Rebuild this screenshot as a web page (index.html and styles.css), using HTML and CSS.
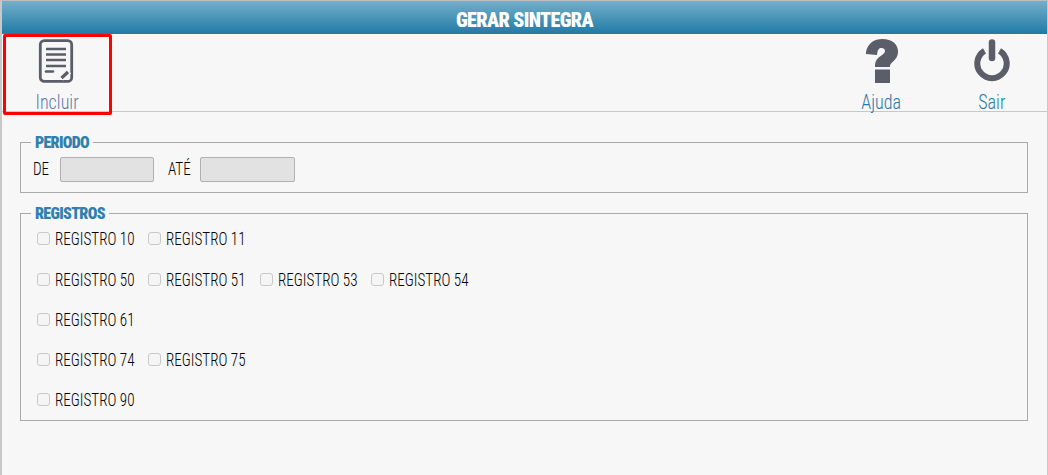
FILE: index.html
```html
<!DOCTYPE html>
<html lang="pt">
<head>
<meta charset="utf-8">
<title>Gerar Sintegra</title>
<link rel="stylesheet" href="styles.css">
</head>
<body>
<div class="frame">
  <header class="title">GERAR SINTEGRA</header>
  <nav class="toolbar">
    <a class="tool tool-first">
      <svg class="icon icon-doc" viewBox="0 0 36 46" width="36" height="46" aria-hidden="true">
        <rect x="2.300" y="2.600" width="31.400" height="40.800" rx="4" fill="none" stroke="#5b5e69" stroke-width="2.800"/>
        <path d="M8 11h20M8 16.500h20M8 22h20M8 28h20" stroke="#5b5e69" stroke-width="2.500" fill="none"/>
        <path d="M8 33.500h7" stroke="#5b5e69" stroke-width="2.600" stroke-linecap="round" fill="none"/>
        <path d="M23 40l8-7" stroke="#f7f7f7" stroke-width="6.500" fill="none"/>
        <path d="M23.500 40l6.500-6" stroke="#5b5e69" stroke-width="3.200" fill="none"/>
      </svg>
      <span class="tool-text">Incluir</span>
    </a>
    <a class="tool tool-help">
      <svg class="icon" viewBox="0 0 32 46" width="32" height="46" aria-hidden="true">
        <path d="M0 14C1.500 5.500 8 1 16.500 1 26 1 32 6 32 13.500c0 5.500-3 8.500-6 11-2 1.700-2 2.500-2 4.500H9c0-5 1-7.500 5-10.500 3-2.200 5-3 5-5.500 0-2-1.500-3-3.500-3-2.500 0-4 1.500-4.500 7L0 16z" fill="#5b5e69"/>
        <rect x="9" y="31.500" width="15" height="13.500" fill="#5b5e69"/>
      </svg>
      <span class="tool-text">Ajuda</span>
    </a>
    <a class="tool tool-exit">
      <svg class="icon" viewBox="0 0 36 46" width="36" height="46" aria-hidden="true">
        <path d="M10.500 12.800a14.700 14.700 0 1 0 15 0" fill="none" stroke="#5b5e69" stroke-width="6"/>
        <path d="M18 4.500v15.500" stroke="#5b5e69" stroke-width="6.500" stroke-linecap="round"/>
      </svg>
      <span class="tool-text">Sair</span>
    </a>
  </nav>
  <main class="content">
    <fieldset class="group group-period">
      <legend>PERIODO</legend>
      <div class="period-row">
        <label class="field-label label-de" for="de"><span class="narrow">DE</span></label>
        <input class="date date-start" id="de" type="text" disabled>
        <label class="field-label label-ate" for="ate"><span class="narrow">ATÉ</span></label>
        <input class="date" id="ate" type="text" disabled>
      </div>
    </fieldset>
    <fieldset class="group group-records">
      <legend>REGISTROS</legend>
      <div class="check-row"><label class="check"><input type="checkbox" disabled><span class="narrow">REGISTRO 10</span></label><label class="check"><input type="checkbox" disabled><span class="narrow">REGISTRO 11</span></label></div>
      <div class="check-row"><label class="check"><input type="checkbox" disabled><span class="narrow">REGISTRO 50</span></label><label class="check"><input type="checkbox" disabled><span class="narrow">REGISTRO 51</span></label><label class="check"><input type="checkbox" disabled><span class="narrow">REGISTRO 53</span></label><label class="check"><input type="checkbox" disabled><span class="narrow">REGISTRO 54</span></label></div>
      <div class="check-row"><label class="check"><input type="checkbox" disabled><span class="narrow">REGISTRO 61</span></label></div>
      <div class="check-row"><label class="check"><input type="checkbox" disabled><span class="narrow">REGISTRO 74</span></label><label class="check"><input type="checkbox" disabled><span class="narrow">REGISTRO 75</span></label></div>
      <div class="check-row"><label class="check"><input type="checkbox" disabled><span class="narrow">REGISTRO 90</span></label></div>
    </fieldset>
  </main>
</div>
</body>
</html>
```
FILE: styles.css
```css
* { box-sizing: border-box; }
html, body { margin: 0; height: 100%; }
body { background: #f7f7f7; font-family: "Roboto", sans-serif; font-stretch: 75%; overflow: hidden; }
.frame {
  height: 475px;
  border-top: 1px solid #bdbdbd;
  border-left: 2px solid #c8c8c8;
  border-right: 1px solid #c8c8c8;
}
.title {
  height: 33px;
  background: linear-gradient(#74afc9, #1f7ba6);
  color: #fff;
  font-weight: 900;
  font-size: 20px;
  letter-spacing: -0.6px;
  line-height: 38px;
  text-align: center;
}
.toolbar {
  height: 78px;
  display: flex;
  border-bottom: 1px solid #c8c8c8;
}
.tool {
  display: flex;
  flex-direction: column;
  align-items: center;
  color: #2a78ab;
  font-size: 21px;
  font-weight: 300;
  line-height: 20px;
  width: 80px;
}
.tool-text { display: inline-block; transform: scaleX(0.86); }
.icon { display: block; margin-top: 4px; margin-bottom: 8px; flex: none; }
.tool-first {
  width: 109px;
  height: 81px;
  margin-left: 1px;
  border: 3px solid #f00;
  border-radius: 2px;
  color: #5f7aa8;
}
.tool-first .icon { margin-top: 1px; }
.icon-doc { margin-left: -3px; }
.tool-help { margin-left: auto; }
.tool-exit { margin-left: 30px; margin-right: 15.500px; }
.content { padding: 22px 19px 0 18px; }
.group {
  margin: 0 0 12px;
  padding: 0;
  border: 1px solid #a9a9a9;
  min-width: 0;
}
.group legend {
  margin-left: 10px;
  padding: 0 4px;
  color: #2f80ae;
  font-weight: 900;
  font-size: 16px;
  letter-spacing: -0.7px;
  line-height: 17px;
}
.group-period { height: 59px; }
.group-records { height: 216px; padding-top: 7px; }
.period-row { display: flex; align-items: center; padding: 6px 0 0 12px; }
.narrow { display: inline-block; font-weight: 300; transform: scaleX(0.84); transform-origin: left center; white-space: nowrap; }
.field-label { color: #000; font-size: 18px; margin-bottom: 3px; }
.label-de { width: 27px; }
.label-ate { width: 32px; margin-left: 14px; }
.date {
  width: 95px;
  height: 25px;
  margin: 0;
  border: 1px solid #b0b0b0;
  border-radius: 2px;
  background: #e2e2e2;
  padding: 0;
}
.date-start { width: 94px; }
.check-row { display: flex; height: 40px; padding-left: 16px; }
.check-row:first-of-type { height: 41px; }
.check {
  display: flex;
  align-items: flex-start;
  width: 111.400px;
  color: #000;
  font-size: 18px;
  line-height: 20px;
}
.check input {
  appearance: none;
  flex: none;
  width: 13px;
  height: 13px;
  margin: 2.500px 5px 0 0;
  border: 1px solid #c9c9c9;
  border-radius: 3px;
  background: #f5f5f5;
}
```
